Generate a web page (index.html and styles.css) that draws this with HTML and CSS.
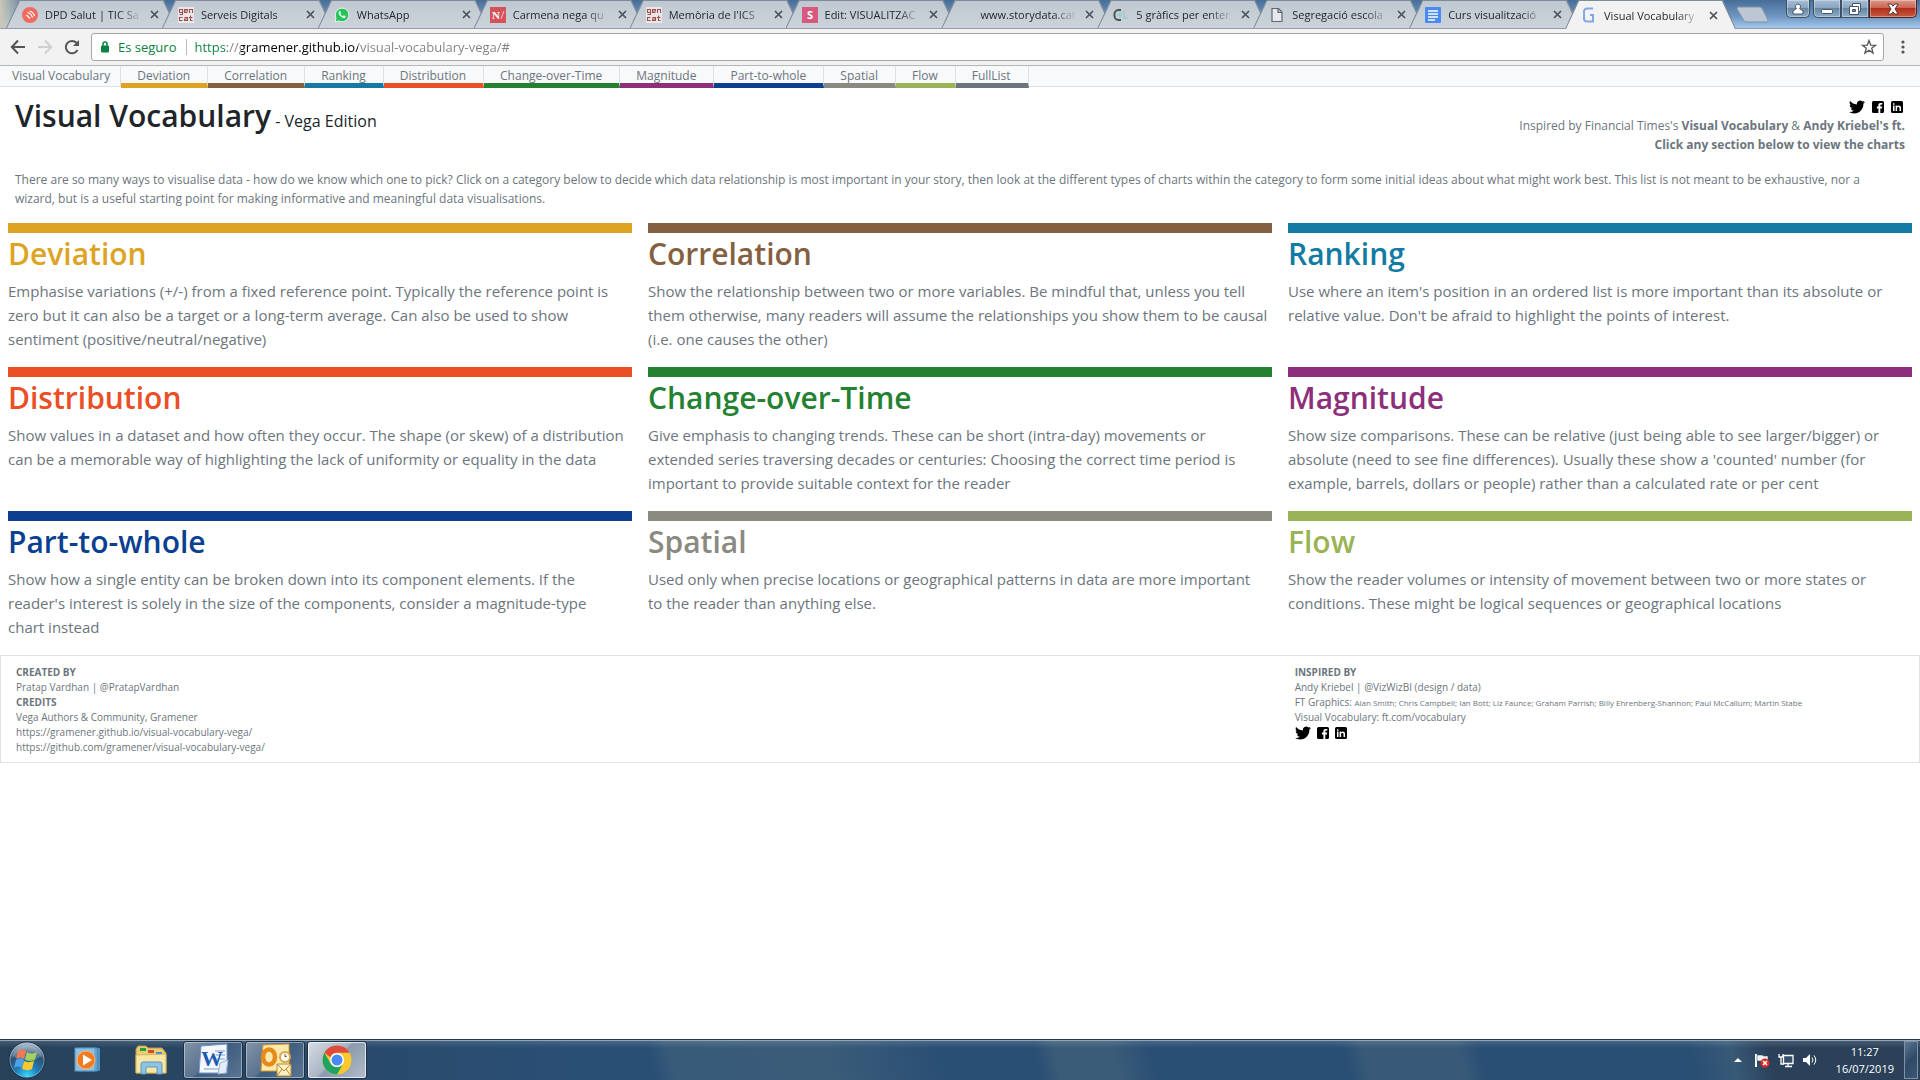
FILE: index.html
```html
<!DOCTYPE html>
<html lang="en">
<head>
    <meta charset="UTF-8">
    <meta name="viewport" content="width=device-width, initial-scale=1.0">
    <title>Visual Vocabulary - Vega Edition</title>
    <link rel="stylesheet" href="styles.css">
</head>
<body>
    <!-- shared icons -->
    <svg class="sprite" aria-hidden="true">
        <symbol id="twitter" viewBox="0 0 24 24"><path d="M23.953 4.57a10 10 0 01-2.825.775 4.958 4.958 0 002.163-2.723c-.951.555-2.005.959-3.127 1.184a4.92 4.92 0 00-8.384 4.482C7.69 8.095 4.067 6.13 1.64 3.162a4.822 4.822 0 00-.666 2.475c0 1.71.87 3.213 2.188 4.096a4.904 4.904 0 01-2.228-.616v.06a4.923 4.923 0 003.946 4.827 4.996 4.996 0 01-2.212.085 4.936 4.936 0 004.604 3.417 9.867 9.867 0 01-6.102 2.105c-.39 0-.779-.023-1.17-.067a13.995 13.995 0 007.557 2.209c9.053 0 13.998-7.496 13.998-13.985 0-.21 0-.42-.015-.63A9.935 9.935 0 0024 4.59z"/></symbol>
        <symbol id="facebook" viewBox="0 0 12 12"><path fill-rule="evenodd" d="M1.500 0h9a1.500 1.500 0 0 1 1.500 1.500v9a1.500 1.500 0 0 1-1.500 1.500H8.300V7.500h1.600l.3-1.900H8.300V4.500c0-.6.3-.9.9-.9h1.100V2H8.700C7.200 2 6.400 2.900 6.400 4.300v1.300H4.900v1.900h1.500V12H1.500A1.500 1.500 0 0 1 0 10.500v-9A1.500 1.500 0 0 1 1.500 0z"/></symbol>
        <symbol id="linkedin" viewBox="0 0 12 12"><rect width="12" height="12" rx="1.500"/><path fill="#fff" d="M2 4.600h1.500V10H2zM2 2.200h1.500v1.500H2zM4.600 4.600H6v.7c.8-1.200 4-1.200 4 1.500V10H8.500V7.200c0-1.800-2.400-1.700-2.400 0V10H4.600z"/></symbol>
        <symbol id="close" viewBox="0 0 9 9"><path d="M1 1l7 7M8 1L1 8" stroke="#4c5258" stroke-width="1.700"/></symbol>
        <symbol id="gencat" viewBox="0 0 16 16"><rect width="16" height="16" fill="#e9e7e8"/><g fill="none" stroke="#a2504e" stroke-width="1.100"><path d="M4.500 2.500h-3v3h3M4.500 2v5.500h-3M6.500 4h3V2.500h-3v3h3M11.500 6V2.500h3V6M4.500 10.500h-3v3h3M6.500 10.500h3v3h-3V12h3M12.500 8.500v5h2M11 10.500h3.500"/></g></symbol>
    </svg>

    <div class="tab-strip">
        <div class="tabs">
            <div class="tab"><div class="tab-body">
                <svg class="favicon" viewBox="0 0 16 16"><circle cx="8" cy="8" r="8" fill="#f26a5f"/><g fill="none" stroke="#fff" stroke-width="1.200"><path d="M4.500 8l3.500 3.500M5.500 5.500q4 1 5 5M7.500 4q4 1 5 5"/></g></svg>
                <span class="tab-title">DPD Salut | TIC Sa</span>
                <button class="tab-close" aria-label="Close tab"><svg><use href="#close"/></svg></button>
            </div></div>
            <div class="tab"><div class="tab-body">
                <svg class="favicon"><use href="#gencat"/></svg>
                <span class="tab-title">Serveis Digitals</span>
                <button class="tab-close" aria-label="Close tab"><svg><use href="#close"/></svg></button>
            </div></div>
            <div class="tab"><div class="tab-body">
                <svg class="favicon" viewBox="0 0 16 16"><path d="M1 15l1-4a6.800 6.800 0 1 1 2.800 2.900z" fill="#27c45b" stroke="#eef5f0"/><path d="M5.300 4.200c-1.500 1.200-.3 3.600 1.300 5.100s3.800 2.500 4.800 1.100l.3-1.200-1.900-1-1 1c-1.200-.5-2-1.300-2.500-2.400l.8-.9-.8-1.700z" fill="#fff"/></svg>
                <span class="tab-title">WhatsApp</span>
                <button class="tab-close" aria-label="Close tab"><svg><use href="#close"/></svg></button>
            </div></div>
            <div class="tab"><div class="tab-body">
                <svg class="favicon" viewBox="0 0 16 16"><rect width="16" height="16" fill="#d5525b"/><text class="fav-serif" x="2" y="12">N</text><path d="M11 12l3-8" stroke="#f4c9cc"/></svg>
                <span class="tab-title">Carmena nega qu</span>
                <button class="tab-close" aria-label="Close tab"><svg><use href="#close"/></svg></button>
            </div></div>
            <div class="tab"><div class="tab-body">
                <svg class="favicon"><use href="#gencat"/></svg>
                <span class="tab-title">Memòria de l'ICS</span>
                <button class="tab-close" aria-label="Close tab"><svg><use href="#close"/></svg></button>
            </div></div>
            <div class="tab"><div class="tab-body">
                <svg class="favicon" viewBox="0 0 16 16"><rect width="16" height="16" fill="#d75a7e"/><text class="fav-sans" x="5" y="12">S</text></svg>
                <span class="tab-title">Edit: VISUALITZAC</span>
                <button class="tab-close" aria-label="Close tab"><svg><use href="#close"/></svg></button>
            </div></div>
            <div class="tab"><div class="tab-body">
                <span class="favicon"></span>
                <span class="tab-title">www.storydata.cat</span>
                <button class="tab-close" aria-label="Close tab"><svg><use href="#close"/></svg></button>
            </div></div>
            <div class="tab"><div class="tab-body">
                <svg class="favicon" viewBox="0 0 16 16"><g fill="none" stroke-width="2"><path d="M8 3H5.500C0 3 0 13 5.500 13H8" stroke="#4c545a"/><path d="M4 8h5M7 5v6M11 4v7h4" stroke="#a4cdd0"/></g></svg>
                <span class="tab-title">5 gràfics per enter</span>
                <button class="tab-close" aria-label="Close tab"><svg><use href="#close"/></svg></button>
            </div></div>
            <div class="tab"><div class="tab-body">
                <svg class="favicon" viewBox="0 0 16 16"><path d="M3 1.500h6.500L13 5v9.500H3zM9 1.500V5.500H13" fill="#e6e9ec" stroke="#5f666d" stroke-width="1.200"/></svg>
                <span class="tab-title">Segregació escola</span>
                <button class="tab-close" aria-label="Close tab"><svg><use href="#close"/></svg></button>
            </div></div>
            <div class="tab"><div class="tab-body">
                <svg class="favicon" viewBox="0 0 16 16"><rect width="16" height="16" rx="1" fill="#4a8af4"/><path d="M3 4h10M3 7h10M3 10h10M3 13h7" stroke="#fff" stroke-width="1.500"/></svg>
                <span class="tab-title">Curs visualització</span>
                <button class="tab-close" aria-label="Close tab"><svg><use href="#close"/></svg></button>
            </div></div>
            <div class="tab active"><div class="tab-body">
                <svg class="favicon" viewBox="0 0 16 16"><path d="M12 1.500H6a3 3 0 0 0-3 3v7a3 3 0 0 0 3 3h6V8H9" fill="none" stroke="#83a6e6" stroke-width="2"/></svg>
                <span class="tab-title">Visual Vocabulary</span>
                <button class="tab-close" aria-label="Close tab"><svg><use href="#close"/></svg></button>
            </div></div>
        </div>
        <button class="new-tab" aria-label="New tab"><svg viewBox="0 0 34 17"><path d="M2 1h21c2 0 3 1 4 3l5 10c0 1 0 2-2 2H11c-2 0-3-1-4-3L1 3c0-1 0-2 1-2z" fill="#bcc7d3" stroke="#7f93a8"/></svg></button>
        <div class="window-controls">
            <button class="win-btn profile" aria-label="Profile"><svg viewBox="0 0 12 12"><path d="M6 1a2.500 2.500 0 0 1 1.500 4.500L11 8v3H1V8l3.500-2.500A2.500 2.500 0 0 1 6 1z" fill="#fff" stroke="#46566a"/></svg></button>
            <button class="win-btn minimize" aria-label="Minimize"><svg viewBox="0 0 12 12"><rect x=".5" y="6.500" width="11" height="4" rx="1" fill="#fff" stroke="#46566a"/></svg></button>
            <button class="win-btn restore" aria-label="Restore"><svg viewBox="0 0 12 12"><path fill-rule="evenodd" d="M3.500.5h8v8h-2v3h-9v-8h3zM3.500 6.500v2h3v-2z" fill="#fff" stroke="#46566a"/><path d="M3.500 3.500h6v5" fill="none" stroke="#46566a"/></svg></button>
            <button class="win-btn exit" aria-label="Close"><svg viewBox="0 0 12 12"><path d="M.8 1h3.400L6 3.200 7.800 1h3.400L8 6l3.200 5H7.800L6 8.800 4.200 11H.8L4 6z" fill="#fff" stroke="#5a3535"/></svg></button>
        </div>
    </div>

    <div class="toolbar">
        <button class="tool" aria-label="Back"><svg viewBox="0 0 16 16"><path d="M15 8H2M8 1.500L1.800 8 8 14.500" fill="none" stroke="#555" stroke-width="2"/></svg></button>
        <button class="tool" aria-label="Forward"><svg viewBox="0 0 16 16"><path d="M1 8h13M8 1.500L14.200 8 8 14.500" fill="none" stroke="#d0d0d0" stroke-width="2"/></svg></button>
        <button class="tool" aria-label="Reload"><svg viewBox="0 0 16 16"><path d="M13.500 11A6.200 6.200 0 1 1 12.500 3.800" fill="none" stroke="#555" stroke-width="2"/><path d="M15 1v6H9z" fill="#555"/></svg></button>
        <div class="omnibox">
            <svg class="lock" viewBox="0 0 8 12"><path d="M2 5V3a2 2 0 0 1 4 0v2" fill="none" stroke="#0b8043" stroke-width="1.500"/><rect y="4.500" width="8" height="7" rx="1" fill="#0b8043"/></svg>
            <label class="secure" for="url">Es seguro</label>
            <input class="url" id="url" type="text" value="https://gramener.github.io/visual-vocabulary-vega/#">
            <button class="tool" aria-label="Bookmark"><svg viewBox="0 0 16 16"><path d="M8 1.500l1.700 4.600 4.900.2-3.900 3 1.400 4.800L8 11.300l-4.100 2.800 1.400-4.800-3.900-3 4.900-.2z" fill="none" stroke="#555" stroke-width="1.300"/></svg></button>
        </div>
        <button class="tool menu" aria-label="Menu"><svg viewBox="0 0 16 16"><g fill="#555"><circle cx="8" cy="3" r="1.600"/><circle cx="8" cy="8" r="1.600"/><circle cx="8" cy="13" r="1.600"/></g></svg></button>
    </div>

    <nav class="navbar">
        <a class="brand" href="#">Visual Vocabulary</a>
        <a class="deviation" href="#">Deviation</a>
        <a class="correlation" href="#">Correlation</a>
        <a class="ranking" href="#">Ranking</a>
        <a class="distribution" href="#">Distribution</a>
        <a class="change" href="#">Change-over-Time</a>
        <a class="magnitude" href="#">Magnitude</a>
        <a class="part" href="#">Part-to-whole</a>
        <a class="spatial" href="#">Spatial</a>
        <a class="flow" href="#">Flow</a>
        <a class="fulllist" href="#">FullList</a>
    </nav>

    <main>
        <header class="header">
            <h1>Visual Vocabulary<small> - Vega Edition</small></h1>
            <div class="inspired">
                <div class="social">
                    <a href="#" aria-label="Twitter"><svg class="wide"><use href="#twitter"/></svg></a>
                    <a href="#" aria-label="Facebook"><svg><use href="#facebook"/></svg></a>
                    <a href="#" aria-label="LinkedIn"><svg><use href="#linkedin"/></svg></a>
                </div>
                <div>Inspired by Financial Times's <a href="#">Visual Vocabulary</a> &amp; <a href="#">Andy Kriebel's ft.</a></div>
                <strong>Click any section below to view the charts</strong>
            </div>
        </header>

        <p class="intro">There are so many ways to visualise data - how do we know which one to pick? Click on a category below to decide which data relationship is most important in your story, then look at the different types of charts within the category to form some initial ideas about what might work best. This list is not meant to be exhaustive, nor a wizard,&nbsp;but is a useful starting point for making informative and meaningful data visualisations.</p>

        <div class="grid">
            <section class="card deviation">
                <h2>Deviation</h2>
                <p>Emphasise variations (+/-) from a fixed reference point. Typically the reference point is zero but it can also be a target or a long-term average. Can also be used to show sentiment (positive/neutral/negative)</p>
            </section>
            <section class="card correlation">
                <h2>Correlation</h2>
                <p>Show the relationship between two or more variables. Be mindful that, unless you tell them otherwise, many readers will assume the relationships you show them to be causal (i.e. one causes the other)</p>
            </section>
            <section class="card ranking">
                <h2>Ranking</h2>
                <p>Use where an item's position in an ordered list is more important than its absolute or relative value. Don't be afraid to highlight the points of interest.</p>
            </section>
            <section class="card distribution">
                <h2>Distribution</h2>
                <p>Show values in a dataset and how often they occur. The shape (or skew) of a distribution can be a memorable way of highlighting the lack of uniformity or equality in the data</p>
            </section>
            <section class="card change">
                <h2>Change-over-Time</h2>
                <p>Give emphasis to changing trends. These can be short (intra-day) movements or extended series traversing decades or centuries: Choosing the correct time period is important to provide suitable context for the reader</p>
            </section>
            <section class="card magnitude">
                <h2>Magnitude</h2>
                <p>Show size comparisons. These can be relative (just being able to see larger/bigger) or absolute (need to see fine differences). Usually these show a 'counted' number (for example, barrels, dollars or people) rather than a calculated rate or per cent</p>
            </section>
            <section class="card part">
                <h2>Part-to-whole</h2>
                <p>Show how a single entity can be broken down into its component elements. If the reader's interest is solely in the size of the components, consider a magnitude-type chart&nbsp;instead</p>
            </section>
            <section class="card spatial">
                <h2>Spatial</h2>
                <p>Used only when precise locations or geographical patterns in data are more important to&nbsp;the reader than anything else.</p>
            </section>
            <section class="card flow">
                <h2>Flow</h2>
                <p>Show the reader volumes or intensity of movement between two or more states or conditions. These might be logical sequences or geographical locations</p>
            </section>
        </div>

        <footer class="footer">
            <div class="created">
                <strong>CREATED BY</strong>
                <div>Pratap Vardhan | <a href="#">@PratapVardhan</a></div>
                <strong>CREDITS</strong>
                <div>Vega Authors &amp; Community, Gramener</div>
                <a href="#">https://gramener.github.io/visual-vocabulary-vega/</a>
                <a href="#">https://github.com/gramener/visual-vocabulary-vega/</a>
            </div>
            <div class="inspiration">
                <strong>INSPIRED BY</strong>
                <div>Andy Kriebel | <a href="#">@VizWizBI</a> (design / data)</div>
                <div>FT Graphics: <small>Alan Smith; Chris Campbell; Ian Bott; Liz Faunce; Graham Parrish; Billy Ehrenberg-Shannon; Paul McCallum; Martin Stabe</small></div>
                <div>Visual Vocabulary: <a href="#">ft.com/vocabulary</a></div>
                <div class="social">
                    <a href="#" aria-label="Twitter"><svg class="wide"><use href="#twitter"/></svg></a>
                    <a href="#" aria-label="Facebook"><svg><use href="#facebook"/></svg></a>
                    <a href="#" aria-label="LinkedIn"><svg><use href="#linkedin"/></svg></a>
                </div>
            </div>
        </footer>
    </main>

    <div class="taskbar">
        <button class="start" aria-label="Start">
            <svg viewBox="0 0 38 38">
                <defs>
                    <radialGradient id="orb" cx=".5" cy=".95" r=".9"><stop offset="0" stop-color="#38dcff"/><stop offset=".35" stop-color="#1f7fb8"/><stop offset=".7" stop-color="#2d4f70"/><stop offset="1" stop-color="#a9bccb"/></radialGradient>
                </defs>
                <circle cx="19" cy="19" r="18" fill="url(#orb)" stroke="#1b3048"/>
                <circle cx="19" cy="19" r="17" fill="none" stroke="#9fb8cc" opacity=".6"/>
                <path d="M10 10c3-2 5-2 8 0l-2 8c-3-2-5-2-8 0z" fill="#ea5a2c"/>
                <path d="M19 11c3 2 6 2 10 0l-2 8c-4 2-7 1-10 0z" fill="#8cc63f"/>
                <path d="M8 19c3-2 5-1 8 0l-2 8c-3-2-5-2-8 0z" fill="#4ba3e3"/>
                <path d="M16 20c4 2 7 1 10 0l-2 8c-4 2-6 1-10 0z" fill="#fcc832"/>
                <path d="M4 15a16 16 0 0 1 30 0c-8 5-22 5-30 0z" fill="#fff" opacity=".2"/>
            </svg>
        </button>
        <button class="task" aria-label="Media Player">
            <svg viewBox="0 0 34 34"><rect x="10" y="5" width="18" height="23" rx="1" fill="#4b93c4"/><rect x="7" y="5" width="18" height="23" fill="#7db7dc" stroke="#4b86b4"/><rect x="3" y="5" width="20" height="23" fill="#8cc1e2" stroke="#5594c0"/><circle cx="14" cy="17" r="9" fill="#f37a1f" stroke="#ffb36b"/><path d="M11 11.500v11l9-5.500z" fill="#fff"/></svg>
        </button>
        <button class="task" aria-label="Explorer">
            <svg viewBox="0 0 34 34"><path d="M2 6l2-3h8l2 2h14l4 5v20H2z" fill="#e8cd77" stroke="#b99a45"/><path d="M6 5h6v3H6z" fill="#21a33c"/><path d="M14 7h6v3h-6z" fill="#d54a2c"/><path d="M22 9h6v3h-6z" fill="#2c93df"/><path d="M2 12l30-1v19H2z" fill="#f8e7a4" stroke="#d3b35c"/><path d="M7 31V21q0-2 2-2h17q2 0 2 2v10h-5v-7H12v7z" fill="#8fc3e6" stroke="#5d97c0"/></svg>
        </button>
        <button class="task open" aria-label="Word">
            <svg viewBox="0 0 34 34"><path d="M5 3l26-2v29H3z" fill="#f4f8fd" stroke="#6f94c9"/><path d="M19 8h10M20 12h9M21 16h8M8 26h15" stroke="#b7cbe6" stroke-width="2"/><text class="icon-w" x="5" y="23">W</text><path d="M24 20l8-3-2 13-8 1z" fill="#e4ecf7" stroke="#9cb2d3"/></svg>
        </button>
        <button class="task open" aria-label="Outlook">
            <svg viewBox="0 0 34 34"><path d="M5 2l26-1v27H3z" fill="#fbe9ad" stroke="#d99a27"/><ellipse cx="11" cy="14" rx="6" ry="7.500" fill="none" stroke="#e58a1b" stroke-width="4.500"/><circle cx="27" cy="14" r="5" fill="#fff" stroke="#dba544" stroke-width="2"/><path d="M27 11v3l2-1" fill="none" stroke="#7a5a20"/><path d="M19 21h14v12H19z" fill="#fdf0c3" stroke="#b88a32"/><path d="M19 21l7 7 7-7M19 33l5-7M33 33l-5-7" fill="none" stroke="#b88a32"/></svg>
        </button>
        <button class="task open current" aria-label="Chrome">
            <svg viewBox="0 0 34 34"><circle cx="17" cy="17" r="14.500" fill="#fbc92f"/><path d="M4.400 9.800A14.500 14.500 0 0 1 29.600 9.800H17a7.200 7.200 0 0 0-6.600 4.400z" fill="#dd4b3e"/><path d="M4.400 9.800A14.500 14.500 0 0 0 17 31.500l6.200-10.800a7.200 7.200 0 0 1-12.400 0z" fill="#1da462"/><circle cx="17" cy="17" r="7" fill="#fff"/><circle cx="17" cy="17" r="5.500" fill="#4a8af4"/></svg>
        </button>
        <div class="tray">
            <svg viewBox="0 0 16 16"><path d="M4 10l4-4 4 4z" fill="#fff"/></svg>
            <svg viewBox="0 0 16 16"><path d="M2 2v13" stroke="#fff" stroke-width="2"/><path d="M3 3h5l2 1h4v6H9L7 9H3z" fill="#f2f4f6" stroke="#26384c" stroke-width=".5"/><circle cx="11" cy="11" r="4.500" fill="#dc2d25"/><path d="M9 9l4 4M13 9l-4 4" stroke="#fff" stroke-width="1.500"/></svg>
            <svg viewBox="0 0 16 16"><path d="M5.500 3.500H15v8H5.500zM10 12v2M7 14.500h7" fill="#345068" stroke="#fff" stroke-width="1.300"/><path d="M1 2v3h4V2M3 5v7h3" fill="none" stroke="#fff" stroke-width="1.300"/></svg>
            <svg viewBox="0 0 16 16"><path d="M1 6h3l4-4v12l-4-4H1z" fill="#fff"/><path d="M10 5.500q2 2.500 0 5M12 3.500q3.500 4.500 0 9" fill="none" stroke="#fff"/></svg>
        </div>
        <div class="clock">
            <time>11:27</time>
            <time>16/07/2019</time>
        </div>
        <button class="show-desktop" aria-label="Show desktop"></button>
    </div>
</body>
</html>
```
FILE: styles.css
```css
* {
    margin: 0;
    padding: 0;
    box-sizing: border-box;
}

body {
    display: flex;
    flex-direction: column;
    min-height: 100vh;
    background: #fff;
    color: #6c757d;
    font-family: 'Open Sans', 'Noto Sans', sans-serif;
    font-size: 12px;
    line-height: 19px;
}

a {
    color: inherit;
    text-decoration: none;
}

button {
    background: none;
    border: none;
    cursor: pointer;
}

svg {
    display: block;
}

.sprite {
    position: absolute;
    width: 0;
    height: 0;
}

/* Category colours */
.deviation { --color: #dda323; }
.correlation { --color: #85603f; }
.ranking { --color: #137ba3; }
.distribution { --color: #ea4f26; }
.change { --color: #258132; }
.magnitude { --color: #8d2f7b; }
.part { --color: #0b3f8f; }
.spatial { --color: #8a8a80; }
.flow { --color: #9ab356; }
.fulllist { --color: #6c757d; }

/* Browser window */
.tab-strip {
    display: flex;
    height: 29px;
    padding: 0 3px 0 6px;
    background: linear-gradient(90deg, #c9c8b8 0, rgba(120, 150, 180, 0) 30px), linear-gradient(#466d98, #6f97c2 60%, #a5c9ee);
    border-bottom: 1px solid #939ba4;
}

.tabs {
    display: flex;
    flex: 1;
    min-width: 0;
    padding-right: 15px;
}

.tab {
    flex: 1;
    min-width: 0;
    height: 28px;
    margin-right: -15px;
    padding: 1px 1px 0;
    background: #7d8b9a;
    clip-path: polygon(13px 0, calc(100% - 13px) 0, 100% 100%, 0 100%);
}

.tab-body {
    display: flex;
    align-items: center;
    height: 27px;
    padding: 0 17px 0 15px;
    background: linear-gradient(#bfc8d1, #ccd3da);
    clip-path: polygon(13px 0, calc(100% - 13px) 0, 100% 100%, 0 100%);
}

.tab.active {
    position: relative;
    height: 29px;
}

.active .tab-body {
    height: 28px;
    background: #f2f2f2;
}

.favicon {
    flex: none;
    width: 16px;
    height: 16px;
}

.fav-serif {
    fill: #fff;
    font: bold 11px 'Liberation Serif', serif;
}

.fav-sans {
    fill: #fff;
    font: bold 11px 'Open Sans', sans-serif;
}

.tab-title {
    flex: 1;
    min-width: 0;
    margin: 0 8px 0 7px;
    overflow: hidden;
    color: #24282c;
    font-size: 11px;
    white-space: nowrap;
    mask-image: linear-gradient(90deg, #000 calc(100% - 24px), transparent);
}

.tab-close svg {
    width: 9px;
    height: 9px;
}

.new-tab {
    flex: none;
    align-self: center;
    width: 34px;
    height: 17px;
}

.new-tab svg {
    width: 34px;
    height: 17px;
}

.window-controls {
    display: flex;
    flex: none;
    height: 18px;
    margin-left: 16px;
}

.win-btn {
    display: flex;
    align-items: center;
    justify-content: center;
    width: 28px;
    background: linear-gradient(#a6bdd6, #8aa5c2 45%, #67859f 50%, #8fadc9);
    border: 1px solid #3c5068;
    border-top: none;
    box-shadow: inset 0 0 0 1px rgba(255, 255, 255, 0.35);
}

.win-btn svg {
    width: 12px;
    height: 12px;
}

.profile {
    width: 24px;
    margin-right: 3px;
    border-radius: 0 0 5px 5px;
}

.minimize {
    border-radius: 0 0 0 5px;
}

.exit {
    width: 48px;
    background: linear-gradient(#dc9a8c, #cc6450 45%, #b0301c 50%, #c95a3e);
    border-color: #4c2424;
    border-radius: 0 0 5px 0;
}

.toolbar {
    display: flex;
    align-items: center;
    gap: 11px;
    height: 37px;
    padding: 0 9px 0 10px;
    background: #f2f2f2;
    border-bottom: 1px solid #b6b6b6;
}

.tool svg {
    width: 16px;
    height: 16px;
}

.omnibox {
    display: flex;
    flex: 1;
    align-items: center;
    height: 28px;
    padding: 0 6px 0 9px;
    background: #fff;
    border: 1px solid #a6a6a6;
    border-radius: 3px;
}

.lock {
    width: 8px;
    height: 12px;
}

.secure {
    margin: 0 10px 0 9px;
    color: #0b8043;
    font-size: 13px;
}

.url {
    flex: 1;
    height: 16px;
    padding-left: 7px;
    border: none;
    border-left: 1px solid #bbb;
    outline: none;
    background: linear-gradient(90deg, #0b8043 40px, #808080 40px, #808080 54px, #000 54px, #000 171px, #808080 171px);
    background-clip: text;
    color: transparent;
    font: 13px 'Open Sans', sans-serif;
}

/* Navigation */
.navbar {
    display: flex;
    height: 21px;
    background: #f8f9fa;
    border-bottom: 1px solid #dee2e6;
}

.navbar a {
    height: 22px;
    padding: 0 17px 0 16px;
    border-right: 1px solid #dee2e6;
    border-bottom: 5px solid var(--color);
    line-height: 19px;
}

.navbar .brand {
    height: 20px;
    padding: 0 10px 0 12px;
    border-bottom: none;
}

/* Header */
.header {
    display: flex;
    justify-content: space-between;
    padding: 10px 15px 0;
}

h1 {
    color: #212529;
    font-size: 30px;
    font-weight: 600;
    line-height: 38px;
}

h1 small {
    font-size: 16px;
    font-weight: 400;
}

.inspired {
    text-align: right;
}

.inspired a {
    font-weight: 700;
}

.social {
    display: flex;
    align-items: center;
    gap: 6px;
}

.social svg {
    width: 12px;
    height: 12px;
}

.social .wide {
    width: 16px;
    height: 16px;
}

.inspired .social {
    justify-content: flex-end;
    gap: 7px;
    height: 19px;
    padding-right: 2px;
}

.intro {
    padding: 16px 15px 15px;
}

/* Categories */
.grid {
    display: grid;
    grid-template-columns: repeat(3, 1fr);
    column-gap: 16px;
    padding: 0 8px;
}

.card {
    padding-bottom: 16px;
    border-top: 10px solid var(--color);
    cursor: pointer;
}

.card h2 {
    margin-bottom: 4px;
    color: var(--color);
    font-size: 30px;
    font-weight: 600;
    line-height: 42px;
}

.card p {
    font-size: 15px;
    line-height: 24px;
}

/* Footer */
.footer {
    display: grid;
    grid-template-columns: 2fr 1fr;
    padding: 9px 0 7px;
    border: 1px solid #dee2e6;
    font-size: 10px;
    line-height: 15px;
}

.footer > div {
    display: flex;
    flex-direction: column;
    align-items: flex-start;
    padding: 0 15px;
}

.footer small {
    font-size: 8px;
}

/* Taskbar */
.taskbar {
    display: flex;
    align-items: center;
    height: 41px;
    margin-top: auto;
    padding: 0 2px 0 8px;
    background:
        linear-gradient(rgba(255, 255, 255, 0.15), transparent 8px),
        linear-gradient(75deg, transparent 34%, #385b7a 35%, #3b5c79 43%, transparent 49%, transparent 54%, #3b5c79 55%, #3b5c79 58%, transparent 60%, transparent 70%, #385a78 71%, #385a78 76%, transparent 77%, transparent 88%, #385a78 90%, #2b4159 92%, #2b4159),
        linear-gradient(90deg, #274159, #2a4f75 30%, #294f73);
    border-top: 1px solid #26384a;
    box-shadow: inset 0 1px #8fa6bb;
}

.start {
    width: 38px;
    height: 38px;
    margin-right: 13px;
}

.start svg {
    width: 38px;
    height: 38px;
}

.task {
    display: flex;
    align-items: center;
    justify-content: center;
    width: 60px;
    height: 38px;
    margin-right: 2px;
}

.task svg {
    width: 34px;
    height: 34px;
}

.open {
    background: linear-gradient(135deg, #8294a8, #5a7390 45%, #3f5d7e 50%, #5c7694);
    border: 1px solid #1d3147;
    border-radius: 3px;
    box-shadow: inset 0 0 0 1px rgba(255, 255, 255, 0.4);
}

.current {
    background: linear-gradient(135deg, #d7dde4, #a9b6c4 45%, #8b9bad 50%, #b0bcc9);
    box-shadow: inset 0 0 0 1px rgba(255, 255, 255, 0.7);
}

.icon-w {
    fill: #1f5cb0;
    font: bold 22px 'Liberation Serif', serif;
}

.tray {
    display: flex;
    gap: 8px;
    margin-left: auto;
}

.tray svg {
    width: 16px;
    height: 16px;
}

.clock {
    display: flex;
    flex-direction: column;
    align-items: center;
    margin: 0 10px 0 18px;
    color: #fff;
    font-size: 11px;
    line-height: 17px;
}

.show-desktop {
    width: 14px;
    height: 38px;
    background: linear-gradient(135deg, #5e7893, #2f4a66 50%, #3d5874);
    border: 1px solid #7f93a8;
}
```
